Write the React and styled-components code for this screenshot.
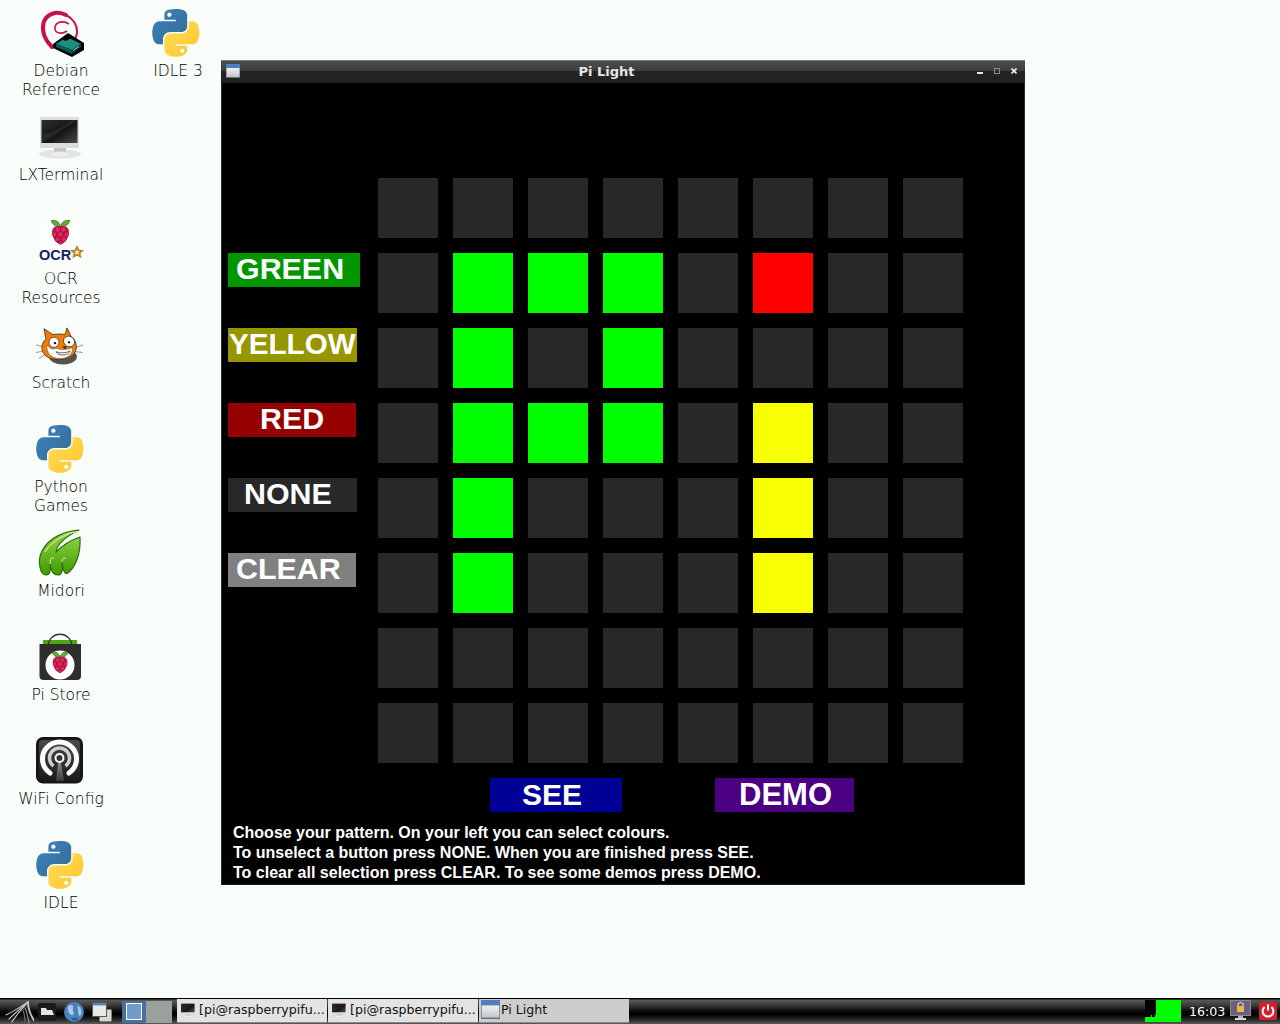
import React from "react";
import styled, { createGlobalStyle } from "styled-components";

const Global = createGlobalStyle`
  html, body { margin: 0; padding: 0; background: #f8fdf9; }
  #root { width: 1280px; height: 1024px; overflow: hidden; }
`;

const Screen = styled.div`
  width: 1280px; height: 1024px; display: flex; flex-direction: column;
  background: #f8fdf9; font-family: "DejaVu Sans", sans-serif;
`;
const Desktop = styled.div`
  position: relative; flex: 1; display: flex; align-items: flex-start;
`;
const IconColumn = styled.div`
  width: ${p => p.$width}px; padding-top: 9px; display: flex; flex-direction: column;
`;
const DesktopItem = styled.div`
  height: 104px; display: flex; flex-direction: column; align-items: center;
`;
const IconBox = styled.div`
  width: 48px; height: 48px; flex: none;
  svg { display: block; }
`;
const IconLabel = styled.div`
  margin-top: 5px; padding-left: ${p => p.$shift || 2}px; text-align: center; font-size: 15.5px; line-height: 18.5px;
  font-family: "DejaVu Sans Light", "DejaVu Sans", sans-serif;
  font-weight: 200; color: #000; white-space: pre-line; width: 110px;
  box-sizing: border-box;
`;

const Window = styled.section`
  position: absolute; left: 221px; top: 60px; width: 804px; height: 825px; box-sizing: border-box;
  background: #000; display: flex; flex-direction: column;
  border: 1px solid #1e1e1e; border-top: 0; border-left-color: #2a2a2a; border-right-color: #2a2a2a;
`;
const TitleBar = styled.header`
  height: 23px; flex: none; position: relative; display: flex; align-items: center; justify-content: center;
  background: linear-gradient(#7d7d7d 0, #7d7d7d 1px, #4e4e4e 1px, #3c3c3c 11px, #252525 11px, #1f1f1f 23px);
  margin: 0 -1px;
`;
const TitleText = styled.div`
  color: #e6e6e6; font-size: 13px; font-weight: 700; padding-right: 33px; padding-bottom: 1px;
`;
const TitleIcon = styled.div`
  position: absolute; left: 5px; top: 4px; width: 14px; height: 14px;
  svg { display: block; }
`;
const TitleButtons = styled.div`
  position: absolute; right: 8px; top: 8px; display: flex; gap: 11px;
  svg { display: block; }
`;
const Body = styled.div`
  flex: 1; padding: 95px 0 0 6px; display: flex; flex-direction: column;
`;
const Board = styled.div`
  display: grid; grid-template-columns: 135px repeat(8, 60px); grid-auto-rows: 60px; gap: 15px;
`;
const Cell = styled.div`
  background: ${p => p.$color};
`;
const ColourButton = styled.div`
  width: ${p => p.$width}px; height: 34px; box-sizing: border-box; padding-left: ${p => p.$inset}px;
  background: ${p => p.$bg}; color: #fff; font: 700 ${p => p.$size}px/31px "Liberation Sans", Arial, sans-serif;
  white-space: nowrap;
`;
const ActionRow = styled.div`
  display: flex; margin: 15px 0 0 262px;
`;
const ActionButton = styled.div`
  width: ${p => p.$width}px; height: 34px; margin-right: ${p => p.$after}px; background: ${p => p.$bg};
  box-sizing: border-box; padding-left: ${p => p.$inset}px;
  color: #fff; font: 700 ${p => p.$size}px/33px "Liberation Sans", Arial, sans-serif;
`;
const Help = styled.div`
  margin: 11px 0 0 5px; color: #fff; font: 700 16px/20px "Liberation Sans", Arial, sans-serif;
`;

const Panel = styled.footer`
  height: 26px; flex: none; display: flex; align-items: stretch;
  background: linear-gradient(#000 0, #000 1px, #5a5a5a 2px, #3c3c3c 7px, #0a0a0a 13px, #000 17px, #2c2c2c 22px, #5c5c5c 26px);
  box-sizing: border-box; padding-top: 1px;
`;
const Launchers = styled.div`
  width: 177px; flex: none; display: flex; align-items: center; position: relative;
  svg { display: block; flex: none; }
`;
const Launcher = styled.div`
  margin-left: ${p => p.$left}px; display: flex;
`;
const Pager = styled.div`
  width: ${p => p.$width}px; height: 22px; background: ${p => p.$bg}; box-sizing: border-box;
  margin-left: ${p => p.$left || 0}px; display: flex; align-items: center; justify-content: center;
`;
const PagerWindow = styled.div`
  width: 14px; height: 15px; border: 1px solid #fff; background: #6f9dcb;
`;
const TaskList = styled.div`
  display: flex; gap: 1px; height: 24px;
`;
const Task = styled.div`
  width: 150px; box-sizing: border-box; display: flex; align-items: center; gap: ${p => p.$active ? 1 : 2}px; padding: 0 0 2px 2px;
  background: ${p => p.$active ? "#cdcdcd" : "#e3e3e3"}; color: #111; font-size: 12.6px;
  border-bottom: 1px solid #8a8a8a; white-space: nowrap; overflow: hidden;
  svg { display: block; flex: none; }
`;
const Tray = styled.div`
  margin-left: auto; display: flex; align-items: center; height: 23px; padding-right: 3px;
  svg { display: block; flex: none; }
`;
const Clock = styled.div`
  color: #fff; font-size: 12.6px; margin: 1px 5px 0 8px; width: 36px; text-align: center;
`;

const Python = ({ id }) => (
  <svg width="48" height="48" viewBox="0 0 112 113">
    <defs>
      <linearGradient id={id + "b"} x1="0" y1="0" x2="1" y2="1">
        <stop offset="0" stopColor="#3b85bf" /><stop offset="1" stopColor="#366994" />
      </linearGradient>
      <linearGradient id={id + "y"} x1="0" y1="0" x2="1" y2="1">
        <stop offset="0" stopColor="#ffe052" /><stop offset="1" stopColor="#ffc331" />
      </linearGradient>
    </defs>
    <path fill={`url(#${id}b)`} fillRule="evenodd" d="M54.92,0.001 C50.33,0.023 45.95,0.414 42.1,1.095 C30.76,3.098 28.7,7.29 28.7,15.032 L28.7,25.257 L55.5,25.257 L55.5,28.666 L28.7,28.666 L18.64,28.666 C10.85,28.666 4.03,33.349 1.9,42.257 C-0.56,52.468 -0.67,58.84 1.9,69.5 C3.8,77.434 8.36,83.088 16.15,83.088 L25.36,83.088 L25.36,70.84 C25.36,61.99 33.02,54.18 42.1,54.18 L68.87,54.18 C76.32,54.18 82.27,48.04 82.27,40.55 L82.27,15.03 C82.27,7.77 76.14,2.3 68.87,1.09 C64.27,0.33 59.5,-0.02 54.92,0.001 Z M40.42,8.24 C43.19,8.24 45.45,10.54 45.45,13.36 C45.45,16.17 43.19,18.45 40.42,18.45 C37.64,18.45 35.39,16.17 35.39,13.36 C35.39,10.54 37.64,8.24 40.42,8.24 Z" />
    <path fill={`url(#${id}y)`} fillRule="evenodd" d="M85.64,28.66 L85.64,40.55 C85.64,49.82 77.8,57.62 68.87,57.62 L42.1,57.62 C34.76,57.62 28.7,63.9 28.7,71.24 L28.7,96.76 C28.7,104.02 35.01,108.29 42.1,110.37 C50.58,112.87 58.72,113.32 68.87,110.37 C75.61,108.42 82.27,104.49 82.27,96.76 L82.27,86.54 L55.5,86.54 L55.5,83.13 L82.27,83.13 L95.66,83.13 C103.45,83.13 106.35,77.7 109.06,69.55 C111.86,61.16 111.74,53.09 109.06,42.3 C107.14,34.54 103.45,28.66 95.66,28.66 L85.64,28.66 Z M70.59,93.4 C73.37,93.4 75.62,95.68 75.62,98.5 C75.62,101.32 73.37,103.6 70.59,103.6 C67.82,103.6 65.56,101.32 65.56,98.5 C65.56,95.68 67.82,93.4 70.59,93.4 Z" />
  </svg>
);

const Debian = () => (
  <svg width="48" height="48" viewBox="0 0 48 48">
    <path d="M30 6 C21 1 10 5 7.5 14 C5.5 23 9 31 16 38" fill="none" stroke="#c8104f" strokeWidth="4" strokeLinecap="round" />
    <path d="M30 6 C36 9 41 15 41 22 C41 27 39 31 36 33" fill="none" stroke="#c8104f" strokeWidth="2" strokeLinecap="round" />
    <path d="M31 22 C25 26 18 24 19 18 C20 13 27 11 33 15" fill="none" stroke="#c8104f" strokeWidth="1.6" />
    <path d="M17 35 L32 24 L48 34 L48 41 L36 48 L17 39 Z" fill="#000" />
    <path d="M20 35 L31 28 L45 35 L36 41 Z" fill="#1b8f84" />
    <path d="M20 35 L36 41 L36 45 L20 38 Z" fill="#0c5a53" />
    <path d="M36 41 L45 35 L45 38 L36 45 Z" fill="#0a3f3a" />
    <path d="M31 26 L25 30 L30 32 L37 28 Z" fill="#000" />
    <path d="M37 41 L43 37 L43 38 L37 42 Z" fill="#8fe0d4" />
  </svg>
);

const Monitor = ({ size = 48 }) => (
  <svg width={size} height={size} viewBox="0 0 48 48">
    <defs>
      <linearGradient id={"scr" + size} x1="0" y1="0" x2="1" y2="1">
        <stop offset="0" stopColor="#2d2d2a" /><stop offset=".55" stopColor="#151513" /><stop offset="1" stopColor="#4b4b48" />
      </linearGradient>
    </defs>
    <ellipse cx="24" cy="41" rx="21" ry="4.5" fill="#d8dcd9" opacity=".7" />
    <rect x="4" y="4" width="39" height="31" rx="1.5" fill="#dcdddb" />
    <rect x="5.5" y="7" width="36" height="23" fill={`url(#scr${size})`} />
    <path d="M6 22 C16 20 28 14 36 7 L41 7 L6 30 Z" fill="#fff" opacity=".07" />
    <rect x="18" y="35" width="12" height="6" fill="#c4c6c4" />
    <ellipse cx="24" cy="41" rx="9" ry="2.5" fill="#eceded" />
  </svg>
);

const Berry = ({ x = 0, y = 0, s = 1 }) => (
  <g transform={`translate(${x} ${y}) scale(${s})`}>
    <path d="M12 7 C8 7 3 5 2 0 C6 -1 11 1 12 7 Z" fill="#5fae2e" stroke="#1f5c12" strokeWidth=".7" />
    <path d="M12 7 C16 7 21 5 22 0 C18 -1 13 1 12 7 Z" fill="#5fae2e" stroke="#1f5c12" strokeWidth=".7" />
    <path d="M12 6 C19 5 22 9 21 14 C20 21 16 25 12 26 C8 25 4 21 3 14 C2 9 5 5 12 6 Z" fill="#c7154f" />
    <g fill="#e4295f" stroke="#7c0b30" strokeWidth=".5">
      <circle cx="9" cy="10" r="2.8" /><circle cx="15" cy="10" r="2.8" />
      <circle cx="5.5" cy="15" r="2.4" /><circle cx="12" cy="15" r="3" /><circle cx="18.5" cy="15" r="2.4" />
      <circle cx="8.5" cy="20.5" r="2.6" /><circle cx="15.5" cy="20.5" r="2.6" /><circle cx="12" cy="24" r="1.8" />
    </g>
  </g>
);

const Ocr = () => (
  <svg width="48" height="48" viewBox="0 0 48 48">
    <rect x=".5" y=".5" width="47" height="47" rx="3" fill="#fff" opacity=".55" />
    <Berry x="13.5" y="3.5" s=".92" />
    <text x="3" y="43" fontFamily="Liberation Sans, sans-serif" fontWeight="700" fontSize="14.5" fill="#12265c">OCR</text>
    <path d="M41 30 L42.6 33.4 L46 33.8 L43.5 36 L44.3 39.5 L41 37.7 L37.7 39.5 L38.5 36 L36 33.8 L39.4 33.4 Z" fill="#f5e3a8" stroke="#b8862a" strokeWidth="1.8" />
  </svg>
);

const Scratch = () => (
  <svg width="48" height="48" viewBox="0 0 48 48">
    <g transform="translate(0 6) scale(1 .85)">
      <g stroke="#777" strokeWidth=".8" fill="none">
        <path d="M9 24 L0 21 M9 28 L0 30 M10 32 L3 37 M38 25 L47 21 M39 29 L47 30" />
      </g>
      <ellipse cx="27" cy="35" rx="14" ry="9" fill="#55554f" />
      <path d="M8 2 L17 9 C21 8 26 8 29 9 L31 1 L35 11 C42 17 42 28 36 34 C29 40 16 40 10 34 C4 28 5 19 10 14 Z" fill="#f57c00" stroke="#333" strokeWidth=".9" />
      <path d="M11 21 C14 26 17 27 20 25 C24 27 32 27 36 24 C38 30 32 38 23 37 C15 37 10 30 11 21 Z" fill="#fff" stroke="#555" strokeWidth=".6" />
      <ellipse cx="18" cy="18" rx="5" ry="6" fill="#fff" stroke="#333" strokeWidth=".8" />
      <ellipse cx="33" cy="17" rx="5.4" ry="6.4" fill="#fff" stroke="#333" strokeWidth=".8" transform="rotate(-20 33 17)" />
      <circle cx="19" cy="19" r="1.3" fill="#111" /><circle cx="33" cy="18" r="1.3" fill="#111" />
      <path d="M26 23 L31 23 L29 26 Z" fill="#222" />
      <path d="M20 29 C24 31 30 31 34 28 C33 34 22 35 20 29 Z" fill="#fff" stroke="#444" strokeWidth=".9" />
    </g>
  </svg>
);

const Midori = () => (
  <svg width="48" height="48" viewBox="0 0 48 48">
    <defs>
      <linearGradient id="mid" x1="0" y1="0" x2="0" y2="1">
        <stop offset="0" stopColor="#9ad94a" /><stop offset="1" stopColor="#3e9a02" />
      </linearGradient>
    </defs>
    <path d="M43 1 C30 2 13 8 6 22 C1 32 4 46 10 46 C14 46 15 42 14 35 C15 44 18 46 22 46 C26 46 27 41 26 33 C27 42 29 46 32 44 C39 38 45 26 44 8 C38 10 29 14 20 23 C21 14 33 6 43 1 Z" fill="url(#mid)" stroke="#2d6b10" strokeWidth="1.2" strokeLinejoin="round" />
    <path d="M14 35 C14 29 16 27 18 30 M26 33 C26 29 28 28 30 30" fill="none" stroke="#dff6b0" strokeWidth="1" />
    <path d="M42 2.5 C32 4 17 10 9 23" fill="none" stroke="#e4f7b8" strokeWidth="1" />
  </svg>
);

const PiStore = () => (
  <svg width="48" height="48" viewBox="0 0 48 48">
    <rect x="7" y="7" width="34" height="4" fill="#4da614" />
    <path d="M3.5 11 H45 V43 Q45 47 41 47 H7.5 Q3.5 47 3.5 43 Z" fill="#2e2e2e" />
    <path d="M12 14 C12 -3 36 -3 36 14" fill="none" stroke="#333" strokeWidth="1.4" />
    <circle cx="24" cy="32" r="14.5" fill="#fff" />
    <Berry x="14.5" y="19" s=".8" />
  </svg>
);

const Wifi = () => (
  <svg width="48" height="48" viewBox="0 0 48 48">
    <defs>
      <linearGradient id="wf" x1="0" y1="0" x2="0" y2="1">
        <stop offset="0" stopColor="#4a4a4a" /><stop offset="1" stopColor="#1a1a1a" />
      </linearGradient>
      <linearGradient id="wfs" x1="0" y1="0" x2="0" y2="1">
        <stop offset="0" stopColor="#8a8a8a" /><stop offset="1" stopColor="#3a3a3a" />
      </linearGradient>
    </defs>
    <rect x="0" y="0" width="47" height="46.5" rx="7" fill="#161616" />
    <rect x="3" y="3" width="41" height="41" rx="4" fill="url(#wf)" />
    <path d="M20 44 L22 26 H25 L28 44 Z" fill="url(#wfs)" />
    <path d="M14 36 A17 17 0 1 1 33 36" fill="none" stroke="#fff" strokeWidth="5" strokeLinecap="round" />
    <path d="M17.5 29 A10 10 0 1 1 29.5 29" fill="none" stroke="#d0d0d0" strokeWidth="3.5" />
    <circle cx="23.5" cy="21" r="4" fill="#333" stroke="#fff" strokeWidth="2" />
  </svg>
);

const WindowGlyph = ({ w = 14, h = 14 }) => (
  <svg width={w} height={h} viewBox="0 0 14 14">
    <defs>
      <linearGradient id={"wg" + w} x1="0" y1="0" x2="0" y2="1">
        <stop offset="0" stopColor="#f2f2f0" /><stop offset="1" stopColor="#c4c6c4" />
      </linearGradient>
    </defs>
    <rect x="0" y="0" width="14" height="14" fill="#5b6f8c" />
    <rect x="0" y="0" width="14" height="4" fill="#4f7fc2" />
    <rect x="0.5" y="4" width="13" height="9" fill={`url(#wg${w})`} />
  </svg>
);

const ArchLogo = () => (
  <svg width="30" height="24" viewBox="0 0 30 24">
    <g stroke="#c9c9c5" strokeWidth="1.1" fill="none" strokeLinecap="round">
      <path d="M2 15 C9 12 16 7 24 2" />
      <path d="M5 19 C10 14 17 8 24 2" />
      <path d="M8 22 C12 15 18 9 24 2" />
      <path d="M24 2 C24 9 27 16 31 22" strokeWidth="1.8" />
      <path d="M21 8 C23 12 24 17 25 23" stroke="#9a9a96" />
      <path d="M19 10 C20 13 21 17 21 21" stroke="#77776f" />
    </g>
  </svg>
);
const FileMgr = () => (
  <svg width="18" height="20" viewBox="0 0 18 20">
    <rect x="0" y="1" width="18" height="18" rx="2" fill="#1a1a1a" />
    <path d="M3 6 H8 L9 8 H14 L16 13 H3 Z" fill="#e6e6e0" />
  </svg>
);
const Globe = () => (
  <svg width="20" height="20" viewBox="0 0 20 20">
    <circle cx="10" cy="10" r="10" fill="#4a82bd" />
    <path d="M4 4 C7 2 10 3 9 6 C8 9 11 10 9 13 C6 14 3 9 4 4 Z M13 3 C17 5 19 10 16 14 C13 12 15 8 13 3 Z" fill="#a9c8e8" />
    <path d="M7 17 C10 15 13 16 15 17 C12 19 9 19 7 17 Z" fill="#2a5a96" />
  </svg>
);
const WindowStack = () => (
  <svg width="20" height="20" viewBox="0 0 20 20">
    <rect x="7" y="7" width="13" height="13" fill="#d9d9d2" stroke="#222" strokeWidth="1" />
    <rect x=".5" y=".5" width="14" height="14" fill="#e9e9e2" stroke="#5a5a5a" strokeWidth="1" />
    <rect x="1" y="1" width="13" height="2.4" fill="#4f7fc2" />
  </svg>
);
const CpuGraph = () => (
  <svg width="36" height="22" viewBox="0 0 36 22">
    <rect width="36" height="22" fill="#00ff00" />
    <path d="M0 0 H11 V15 H10 V17 H7 V15 H6 V17 H0 Z" fill="#000" />
  </svg>
);
const LockScreen = () => (
  <svg width="21" height="21" viewBox="0 0 21 21">
    <rect x=".5" y=".5" width="20" height="15" fill="#6b5f80" stroke="#8a8a92" />
    <rect x="7" y="6" width="7" height="6" fill="#e2b94a" />
    <path d="M8 6 V4 Q10.5 1 13 4 V6" fill="none" stroke="#e8d9a8" strokeWidth="1.2" />
    <rect x="8" y="16" width="5" height="2" fill="#b5b5b5" />
    <rect x="5" y="18" width="11" height="2" fill="#d8d8d8" />
  </svg>
);
const Power = () => (
  <svg width="18" height="18" viewBox="0 0 18 18">
    <rect width="18" height="18" rx="2" fill="#d3202a" />
    <path d="M5.6 5 A5.4 5.4 0 1 0 12.4 5" fill="none" stroke="#fff" strokeWidth="2" />
    <path d="M9 2.6 V8.6" stroke="#fff" strokeWidth="2" />
  </svg>
);

const off = "#282828", G = "#00ff00", R = "#ff0000", Y = "#f8ff00";
const lit = {
  "1,1": G, "1,2": G, "1,3": G, "1,5": R,
  "2,1": G, "2,3": G,
  "3,1": G, "3,2": G, "3,3": G, "3,5": Y,
  "4,1": G, "4,5": Y,
  "5,1": G, "5,5": Y,
};
const labels = {
  1: { text: "GREEN", width: 132, inset: 8, size: 30.4, bg: "#009600" },
  2: { text: "YELLOW", width: 129, inset: 1, size: 29.6, bg: "#969600" },
  3: { text: "RED", width: 128, inset: 32, size: 30.4, bg: "#960000" },
  4: { text: "NONE", width: 129, inset: 16, size: 30.4, bg: "#282828" },
  5: { text: "CLEAR", width: 128, inset: 8, size: 30.4, bg: "#808080" },
};

const left = [
  ["Debian\nReference", <Debian />],
  ["LXTerminal", <Monitor />],
  ["OCR\nResources", <Ocr />],
  ["Scratch", <Scratch />],
  ["Python\nGames", <Python id="pg" />],
  ["Midori", <Midori />],
  ["Pi Store", <PiStore />],
  ["WiFi Config", <Wifi />],
  ["IDLE", <Python id="id" />],
];

export default function App() {
  return (
    <Screen>
      <Global />
      <Desktop>
        <IconColumn $width={120}>
          {left.map(([t, icon]) => (
            <DesktopItem key={t}>
              <IconBox>{icon}</IconBox>
              <IconLabel>{t}</IconLabel>
            </DesktopItem>
          ))}
        </IconColumn>
        <IconColumn $width={112}>
          <DesktopItem>
            <IconBox><Python id="i3" /></IconBox>
            <IconLabel $shift={4}>IDLE 3</IconLabel>
          </DesktopItem>
        </IconColumn>
        <Window>
          <TitleBar>
            <TitleIcon><WindowGlyph /></TitleIcon>
            <TitleText>Pi Light</TitleText>
            <TitleButtons>
              <svg width="6" height="7" viewBox="0 0 6 7"><rect y="4" width="6" height="2" fill="#e8e8e8" /></svg>
              <svg width="6" height="7" viewBox="0 0 6 7"><rect x=".5" y=".5" width="5" height="5" fill="none" stroke="#8c8c8c" /></svg>
              <svg width="6" height="7" viewBox="0 0 6 7"><path d="M.5 .5 L5.5 5.5 M5.5 .5 L.5 5.5" stroke="#f0f0f0" strokeWidth="1.6" /></svg>
            </TitleButtons>
          </TitleBar>
          <Body>
            <Board>
              {Array.from({ length: 8 }).flatMap((_, r) => [
                labels[r]
                  ? <ColourButton key={"l" + r} $width={labels[r].width} $inset={labels[r].inset} $size={labels[r].size} $bg={labels[r].bg}>{labels[r].text}</ColourButton>
                  : <div key={"l" + r} />,
                ...Array.from({ length: 8 }).map((__, c) => (
                  <Cell key={r + "-" + c} $color={lit[r + "," + c] || off} />
                )),
              ])}
            </Board>
            <ActionRow>
              <ActionButton $width={132} $after={93} $inset={32} $size={30} $bg="#000096">SEE</ActionButton>
              <ActionButton $width={139} $after={0} $inset={24} $size={31} $bg="#4b0082">DEMO</ActionButton>
            </ActionRow>
            <Help>
              Choose your pattern. On your left you can select colours.<br />
              To unselect a button press NONE. When you are finished press SEE.<br />
              To clear all selection press CLEAR. To see some demos press DEMO.
            </Help>
          </Body>
        </Window>
      </Desktop>
      <Panel>
        <Launchers>
          <Launcher $left={4}><ArchLogo /></Launcher>
          <Launcher $left={4}><FileMgr /></Launcher>
          <Launcher $left={8}><Globe /></Launcher>
          <Launcher $left={8}><WindowStack /></Launcher>
          <Pager $width={24} $left={10} $bg="#4a6f9c"><PagerWindow /></Pager>
          <Pager $width={26} $bg="#9aa19d" />
        </Launchers>
        <TaskList>
          <Task><Monitor size={18} />[pi@raspberrypifu...</Task>
          <Task><Monitor size={18} />[pi@raspberrypifu...</Task>
          <Task $active><WindowGlyph w={19} h={19} />Pi Light</Task>
        </TaskList>
        <Tray>
          <CpuGraph />
          <Clock>16:03</Clock>
          <LockScreen />
          <Launcher $left={8}><Power /></Launcher>
        </Tray>
      </Panel>
    </Screen>
  );
}
